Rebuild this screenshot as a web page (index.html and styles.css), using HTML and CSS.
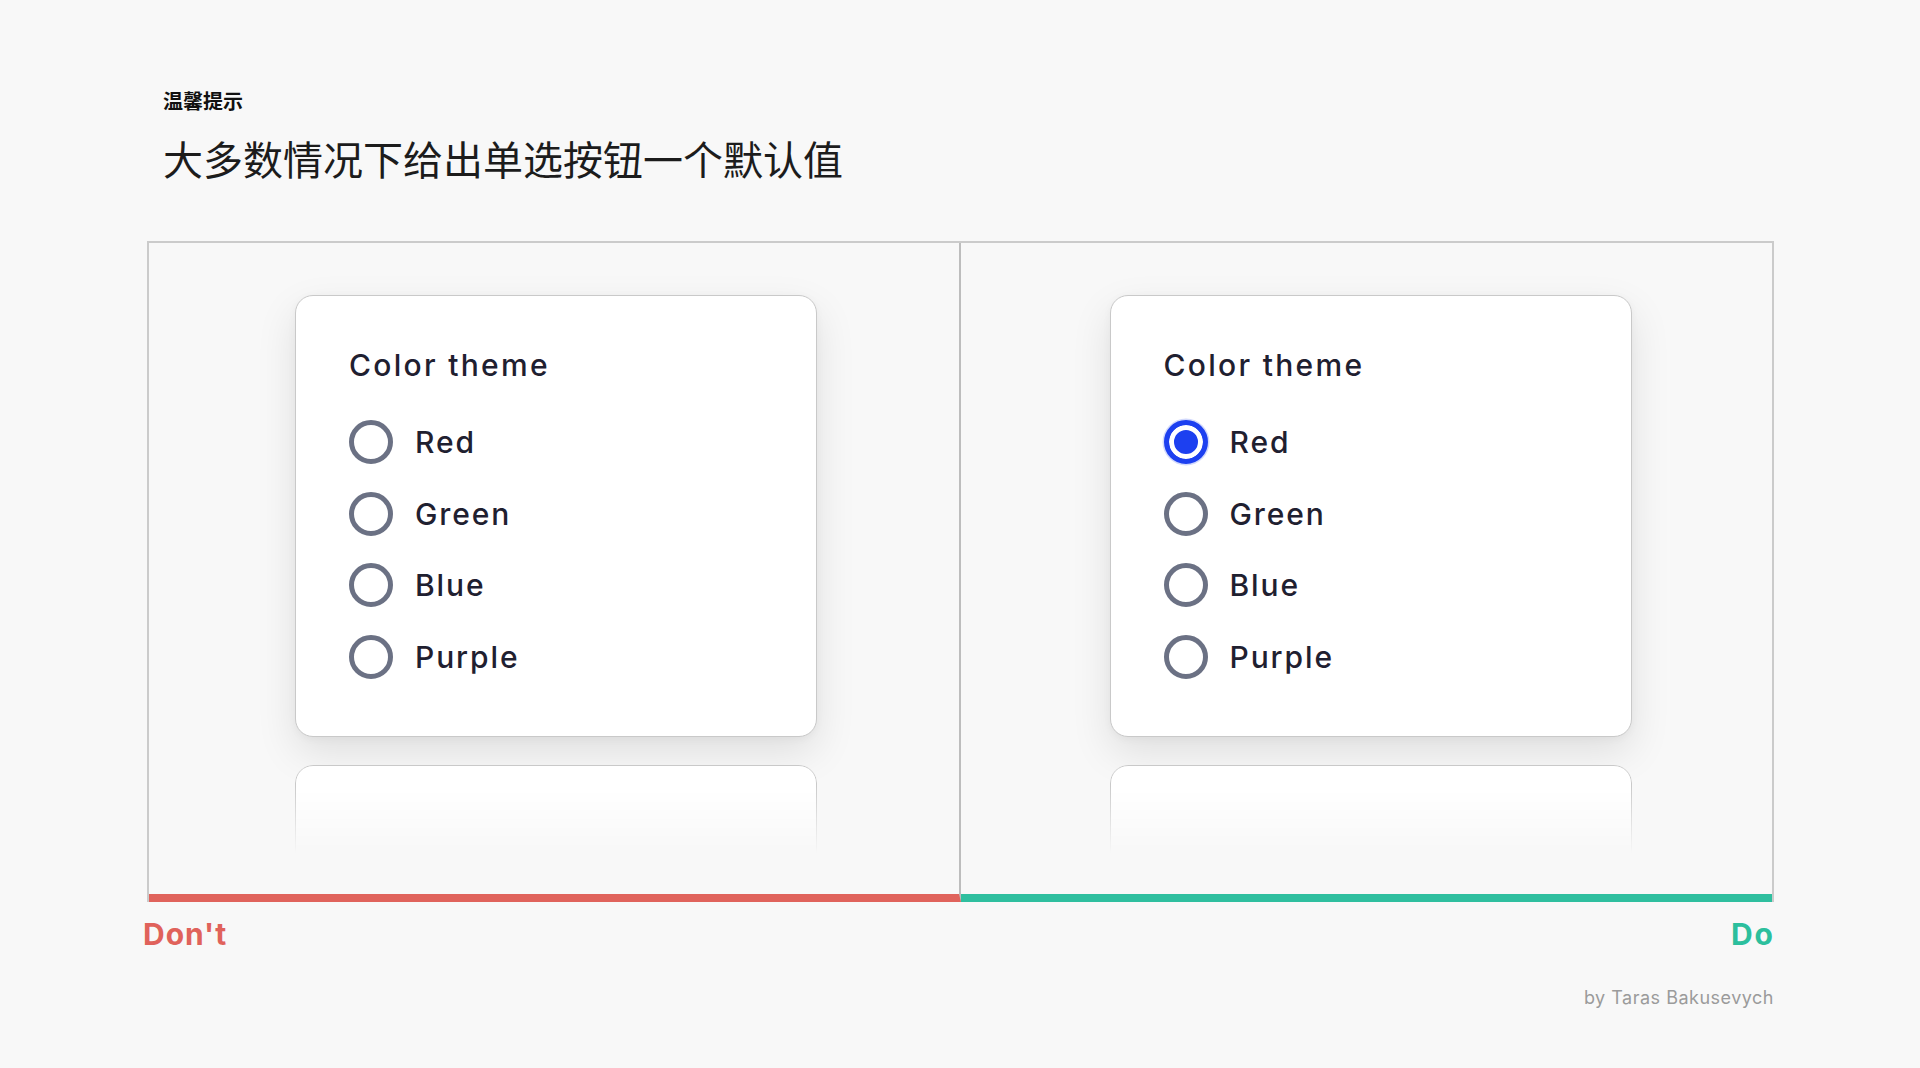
FILE: index.html
```html
<!DOCTYPE html>
<html lang="zh-CN">
<head>
<meta charset="utf-8">
<title>温馨提示</title>
<link rel="stylesheet" href="styles.css">
</head>
<body>
<main class="slide">
  <header class="intro">
    <p class="eyebrow">温馨提示</p>
    <h1 class="title">大多数情况下给出单选按钮一个默认值</h1>
  </header>

  <section class="compare">
    <div class="panel panel-dont">
      <div class="card">
        <h2 class="card-title">Color theme</h2>
        <ul class="options">
          <li class="option"><span class="radio"></span><span>Red</span></li>
          <li class="option"><span class="radio"></span><span>Green</span></li>
          <li class="option"><span class="radio"></span><span>Blue</span></li>
          <li class="option"><span class="radio"></span><span>Purple</span></li>
        </ul>
      </div>
      <div class="card card-ghost"></div>
    </div>
    <div class="panel panel-do">
      <div class="card">
        <h2 class="card-title">Color theme</h2>
        <ul class="options">
          <li class="option"><span class="radio radio-checked"></span><span>Red</span></li>
          <li class="option"><span class="radio"></span><span>Green</span></li>
          <li class="option"><span class="radio"></span><span>Blue</span></li>
          <li class="option"><span class="radio"></span><span>Purple</span></li>
        </ul>
      </div>
      <div class="card card-ghost"></div>
    </div>
  </section>

  <div class="verdicts">
    <span class="verdict verdict-dont">Don't</span>
    <span class="verdict verdict-do">Do</span>
  </div>

  <p class="credit">by Taras Bakusevych</p>
</main>
</body>
</html>
```

FILE: styles.css
```css
html, body {
  margin: 0;
  padding: 0;
}

body {
  background: #f8f8f8;
  font-family: Inter, "Noto Sans", sans-serif;
  color: #1f2030;
}

.slide {
  width: 1627px;
  margin-left: 147px;
  padding-top: 87px;
}

.intro {
  padding-left: 16px;
}

.eyebrow {
  margin: 0;
  font-family: "Noto Sans CJK SC", "Noto Sans", sans-serif;
  font-weight: 700;
  font-size: 20px;
  line-height: 28px;
  color: #111111;
}

.title {
  margin: 15px 0 0;
  font-family: "Noto Sans CJK SC", "Noto Sans", sans-serif;
  font-weight: 400;
  font-size: 40px;
  line-height: 56px;
  color: #1c1c1c;
}

.compare {
  margin-top: 55px;
  display: grid;
  grid-template-columns: 1fr 1fr;
  border: 2px solid #cbcbcb;
  border-bottom: 0;
}

.panel {
  box-sizing: border-box;
  height: 659px;
  padding-top: 52px;
  display: flex;
  flex-direction: column;
  align-items: flex-start;
  overflow: hidden;
  border-bottom: 8px solid;
}

.panel-dont {
  padding-left: 146px;
  border-right: 2px solid #bdbdbd;
  border-bottom-color: #e0635c;
}

.panel-do {
  padding-left: 149px;
  border-bottom-color: #2fbf9f;
}

.card {
  box-sizing: border-box;
  width: 522px;
  flex-shrink: 0;
  background: #ffffff;
  border: 1px solid #c9c9c9;
  border-radius: 18px;
  padding: 49px 53px 57px;
  box-shadow: 0 16px 40px rgba(0, 0, 0, 0.10), 0 2px 8px rgba(0, 0, 0, 0.04);
}

.card-ghost {
  margin-top: 28px;
  height: 130px;
  padding: 0;
  -webkit-mask-image: linear-gradient(to bottom, #000 15%, transparent 68%);
  mask-image: linear-gradient(to bottom, #000 15%, transparent 68%);
}

.card-title {
  margin: 0;
  font-weight: 500;
  font-size: 30px;
  line-height: 40px;
  letter-spacing: 2.3px;
  color: #1f2030;
}

.options {
  list-style: none;
  margin: 35px 0 0;
  padding: 0;
  display: flex;
  flex-direction: column;
  gap: 27.5px;
}

.option {
  display: flex;
  align-items: center;
  gap: 22px;
  height: 44px;
  font-weight: 500;
  font-size: 30px;
  line-height: 40px;
  letter-spacing: 1.9px;
  color: #1f2030;
}

.radio {
  box-sizing: border-box;
  width: 44px;
  height: 44px;
  flex-shrink: 0;
  border: 5px solid #6b7184;
  border-radius: 50%;
  background: #ffffff;
}

.radio-checked {
  border-color: #1d40f0;
  background: #1d40f0;
  box-shadow: inset 0 0 0 5px #ffffff, 0 0 0 1.5px rgba(29, 64, 240, 0.2);
}

.verdicts {
  display: flex;
  justify-content: space-between;
  margin-top: 14px;
  font-weight: 700;
  font-size: 30px;
  line-height: 36px;
}

.verdict-dont {
  color: #e0625b;
  margin-left: -4px;
  letter-spacing: 1px;
}

.verdict-do {
  color: #2cbf9d;
  letter-spacing: 2px;
  margin-right: -1px;
}

.credit {
  margin: 34px 0 0;
  text-align: right;
  font-weight: 400;
  font-size: 18px;
  line-height: 24px;
  letter-spacing: 0.5px;
  color: #9b9b9b;
}
```
